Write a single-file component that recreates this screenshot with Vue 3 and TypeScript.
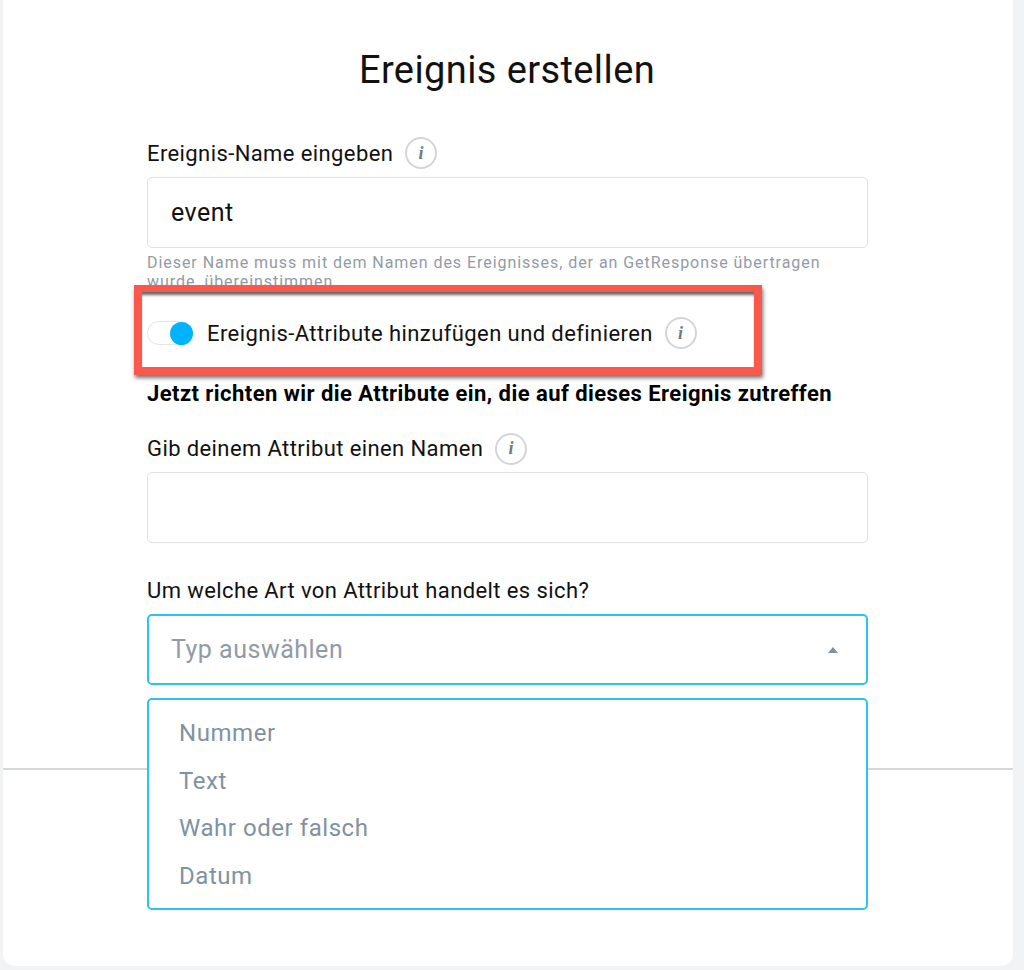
<script setup lang="ts">
const options = ['Nummer', 'Text', 'Wahr oder falsch', 'Datum'];
</script>

<template>
  <div class="page">
    <div class="card">
      <h1 class="title">Ereignis erstellen</h1>

      <div class="form">
        <div class="label first">
          <span>Ereignis-Name eingeben</span>
          <span class="info"><i>i</i></span>
        </div>
        <div class="input value">event</div>
        <p class="help">
          Dieser Name muss mit dem Namen des Ereignisses, der an GetResponse übertragen wurde, übereinstimmen
        </p>

        <div class="toggle-row">
          <span class="toggle"><span class="knob"></span></span>
          <span>Ereignis-Attribute hinzufügen und definieren</span>
          <span class="info"><i>i</i></span>
          <div class="highlight"></div>
        </div>

        <div class="heading">Jetzt richten wir die Attribute ein, die auf dieses Ereignis zutreffen</div>

        <div class="label attr">
          <span>Gib deinem Attribut einen Namen</span>
          <span class="info"><i>i</i></span>
        </div>
        <div class="input"></div>

        <div class="label kind">
          <span>Um welche Art von Attribut handelt es sich?</span>
        </div>
        <div class="select-wrap">
          <div class="input select">
            <span>Typ auswählen</span>
            <span class="caret"></span>
          </div>
          <ul class="menu">
            <li v-for="o in options" :key="o">{{ o }}</li>
          </ul>
        </div>
      </div>

      <div class="divider"></div>
    </div>
  </div>
</template>

<style>
html,
body {
  margin: 0;
  background: #f2f3f5;
}
</style>

<style scoped>
.page {
  height: 970px;
  padding: 0 11px 4px 3px;
  box-sizing: border-box;
  font-family: Roboto, "Liberation Sans", sans-serif;
  color: #111;
}

.card {
  height: 100%;
  background: #fff;
  border-radius: 0 0 12px 12px;
  display: flex;
  flex-direction: column;
}

.title {
  margin: 0;
  padding: 49px 2px 0 0;
  height: 42px;
  line-height: 42px;
  text-align: center;
  font-size: 38px;
  font-weight: 400;
  letter-spacing: 0.4px;
}

.form {
  margin: 0 145px 0 144px;
  display: flex;
  flex-direction: column;
}

.label {
  display: flex;
  align-items: center;
  height: 32px;
  font-size: 22px;
  letter-spacing: 0.4px;
}

.label.first {
  margin-top: 46px;
}

.label.attr {
  margin-top: 23px;
  height: 31px;
}

.label.kind {
  margin-top: 32px;
  height: 31px;
}

.info {
  width: 32px;
  height: 32px;
  margin-left: 12px;
  box-sizing: border-box;
  border: 2px solid #d3d6d9;
  border-radius: 50%;
  display: flex;
  align-items: center;
  justify-content: center;
  font-family: "Liberation Serif", serif;
  font-size: 18px;
  font-weight: 700;
  color: #6f7c88;
}

.input {
  height: 71px;
  margin-top: 8px;
  box-sizing: border-box;
  background: #fff;
  border: 1px solid #dfe2e5;
  border-radius: 5px;
  padding: 0 23px;
  display: flex;
  align-items: center;
  font-size: 25px;
  letter-spacing: 0.5px;
}

.help {
  margin: 5px 0 0;
  font-size: 16px;
  line-height: 19px;
  height: 38px;
  letter-spacing: 0.95px;
  color: #929ba5;
}

.toggle-row {
  position: relative;
  display: flex;
  align-items: center;
  height: 32px;
  margin-top: 26px;
  font-size: 22px;
  letter-spacing: 0.41px;
}

.toggle {
  width: 46px;
  height: 24px;
  margin-right: 14px;
  box-sizing: border-box;
  border: 1px solid #e3e5e8;
  border-radius: 12px;
  display: flex;
  align-items: center;
  justify-content: flex-end;
}

.knob {
  width: 23px;
  height: 23px;
  margin-right: -1px;
  border-radius: 50%;
  background: #00b3ff;
}

.highlight {
  position: absolute;
  left: -13px;
  top: -32px;
  width: 628px;
  height: 90px;
  box-sizing: border-box;
  border-style: solid;
  border-width: 7px 8px 8px;
  border-color: #f9584c;
  box-shadow: 1px 3px 4px rgba(0, 0, 0, 0.55), inset 0 4px 3px -1px rgba(0, 0, 0, 0.6);
}

.heading {
  margin-top: 29px;
  height: 32px;
  line-height: 32px;
  font-size: 22px;
  font-weight: 700;
  letter-spacing: 0.44px;
  color: #000;
}

.select-wrap {
  position: relative;
  z-index: 1;
}

.select {
  border: 2px solid #2bc4ec;
  justify-content: space-between;
  color: #929ba5;
  padding: 0 28px 0 22px;
}

.caret {
  width: 0;
  height: 0;
  border-left: 5px solid transparent;
  border-right: 5px solid transparent;
  border-bottom: 6px solid #7f919f;
}

.menu {
  position: absolute;
  top: 92px;
  left: 0;
  right: 0;
  margin: 0;
  padding: 10px 30px 8px;
  list-style: none;
  background: #fff;
  border: 2px solid #2bc4ec;
  border-radius: 5px;
  font-size: 24px;
  letter-spacing: 0.55px;
  color: #7f92a3;
}

.menu li {
  height: 47.5px;
  line-height: 47.5px;
}

.divider {
  margin-top: 83px;
  height: 2px;
  background: #d5d8da;
}
</style>
